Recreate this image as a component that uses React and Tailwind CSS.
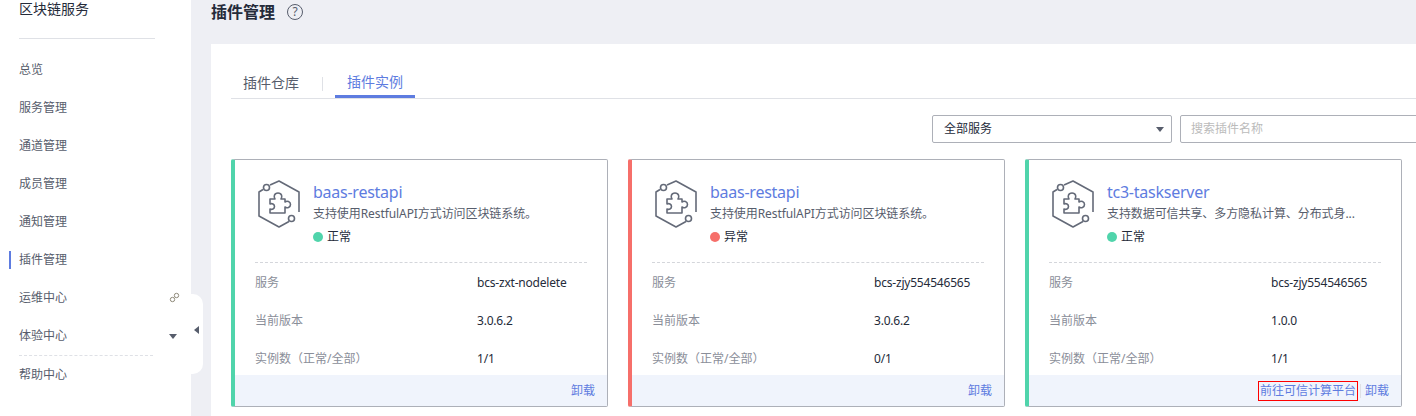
import React from "react";

const font = "font-['Noto_Sans','Noto_Sans_CJK_SC',sans-serif]";

const navItems = ["总览", "服务管理", "通道管理", "成员管理", "通知管理", "插件管理", "运维中心", "体验中心"];

const cards = [
  { name: "baas-restapi", desc: "支持使用RestfulAPI方式访问区块链系统。", ok: true, service: "bcs-zxt-nodelete", version: "3.0.6.2", count: "1/1" },
  { name: "baas-restapi", desc: "支持使用RestfulAPI方式访问区块链系统。", ok: false, service: "bcs-zjy554546565", version: "3.0.6.2", count: "0/1" },
  { name: "tc3-taskserver", desc: "支持数据可信共享、多方隐私计算、分布式身...", ok: true, service: "bcs-zjy554546565", version: "1.0.0", count: "1/1", trusted: true },
];

const PluginIcon = () => (
  <svg width="42" height="48" viewBox="0 0 42 48" fill="none" stroke="#646a78" strokeWidth="1.6" className="shrink-0">
    <path d="M12 5 L21 1 L41 12 V32" strokeLinejoin="round" />
    <path d="M31 41.5 L21 47 L1 36 V12 L5 9.5" strokeLinejoin="round" />
    <circle cx="8.5" cy="7.5" r="3" />
    <circle cx="33.5" cy="38.5" r="3" />
    <path
      d="M12 19 H17 C15.5 17 16 13 20 13 C24 13 24.5 17 23 19 H27 V22 C29 20.5 32.5 21.5 32.5 24.5 C32.5 27.5 29 28.5 27 27 V33 H12 V29 C14 30 16.5 29 16.5 26.5 C16.5 24 14 23 12 24 Z"
      strokeLinejoin="round"
    />
  </svg>
);

const Row = ({ label, value }) => (
  <div className="flex items-center h-[38px]">
    <span className="w-[222px] shrink-0 text-[#8a8e99]">{label}</span>
    <span className="text-[#252b3a] tracking-[-0.2px]">{value}</span>
  </div>
);

const Card = ({ card }) => (
  <div
    className={`w-[377px] h-[248px] shrink-0 flex flex-col rounded-[2px] border border-[#adb0b8] border-l-[4px] ${
      card.ok ? "border-l-[#50d4ab]" : "border-l-[#f66f6a]"
    }`}
  >
    <div className="flex-1 min-h-0 px-[20px]">
      <div className="flex gap-[13px] pt-[20px] pl-[3px] h-[103px] border-b border-dashed border-[#d4d6db]">
        <PluginIcon />
        <div className="min-w-0">
          <div className="text-[16px] leading-[24px] text-[#5e7ce0] tracking-[-0.25px]">{card.name}</div>
          <div className="text-[#575d6c] leading-[18px] mt-[1px] whitespace-nowrap tracking-[-0.08px]">{card.desc}</div>
          <div className="flex items-center gap-[4px] mt-[5px] leading-[18px] text-[#252b3a]">
            <span className={`w-[10px] h-[10px] rounded-full ${card.ok ? "bg-[#50d4ab]" : "bg-[#f66f6a]"}`} />
            {card.ok ? "正常" : "异常"}
          </div>
        </div>
      </div>
      <div className="pt-[1px]">
        <Row label="服务" value={card.service} />
        <Row label="当前版本" value={card.version} />
        <Row label="实例数（正常/全部）" value={card.count} />
      </div>
    </div>
    <div className="relative h-[31px] shrink-0 bg-[#f0f4fc] flex items-center justify-end pr-[12px] text-[#5e7ce0]">
      {card.trusted && (
        <>
          <span className="h-[20px] px-[1px] flex items-center border border-[#ff0000]">前往可信计算平台</span>
          <span className="w-px h-[14px] bg-[#dfe1e6] ml-[2px]" />
        </>
      )}
      <span className={card.trusted ? "ml-[4px]" : ""}>卸载</span>
    </div>
  </div>
);

export default function App() {
  return (
    <div className={`${font} relative w-[1416px] h-[416px] overflow-hidden flex bg-[#eeeff4] text-[12px]`}>
      {/* sidebar */}
      <aside className="w-[191px] shrink-0 bg-white text-[#575d6c]">
        <div className="h-[40px] mx-[19px] mr-[36px] border-b border-[#dfe1e6]">
          <div className="text-[14px] leading-[20px] text-[#252b3a] -mt-[1px]">区块链服务</div>
        </div>
        <nav className="pt-[12px]">
          {navItems.map((item) => (
            <div key={item} className="relative h-[38px] flex items-center pl-[19px] pr-[13px]">
              {item === "插件管理" && <span className="absolute left-[9px] top-[10px] w-[2px] h-[18px] bg-[#5e7ce0]" />}
              <span className="flex-1">{item}</span>
              {item === "运维中心" && (
                <svg width="11" height="11" viewBox="0 0 11 11" fill="none" stroke="#8f8a7a" strokeWidth="1" className="-mr-[2px] -mt-[2px]">
                  <circle cx="3.5" cy="7.5" r="2.2" />
                  <circle cx="7.5" cy="3.5" r="2.2" />
                </svg>
              )}
              {item === "体验中心" && <span className="mr-[1px] border-x-[4px] border-x-transparent border-t-[5px] border-t-[#575d6c]" />}
            </div>
          ))}
          <div className="mx-[19px] mr-[38px] border-t border-dashed border-[#dfe1e6]" />
          <div className="h-[38px] flex items-center pl-[19px]">帮助中心</div>
        </nav>
      </aside>

      {/* collapse handle */}
      <div className="absolute left-[191px] top-[294px] w-[12px] h-[80px] bg-white rounded-r-[10px] flex items-center justify-end pr-[4px]">
        <span className="border-y-[4px] border-y-transparent border-r-[5px] border-r-[#575d6c] -mt-[8px]" />
      </div>

      {/* content */}
      <main className="flex-1 min-w-0 pl-[20px]">
        <div className="h-[44px] flex items-start gap-[12px]">
          <h1 className="text-[16px] leading-[24px] font-bold text-[#252b3a]">插件管理</h1>
          <span className="mt-[4px] w-[16px] h-[16px] rounded-full border border-[#575d6c] text-[#575d6c] text-[12px] leading-[14px] text-center">?</span>
        </div>
        <div className="bg-white h-[372px] pl-[20px] pt-[27px]">
          <div className="flex items-end h-[28px] border-b border-[#dfe1e6] text-[14px] text-[#575d6c]">
            <div className="h-[27px] pt-[1px] pl-[12px] pr-[24px] relative">
              插件仓库
              <span className="absolute right-0 top-[6px] w-px h-[14px] bg-[#dfe1e6]" />
            </div>
            <div className="h-[28px] pt-[1px] w-[80px] ml-[12px] text-center text-[#5e7ce0] border-b-[3px] border-[#5e7ce0]">插件实例</div>
          </div>
          <div className="flex justify-end gap-[8px] mt-[16px] -mr-[14px]">
            <div className="w-[240px] h-[28px] rounded-[2px] border border-[#adb0b8] flex items-center justify-between pl-[11px] pr-[7px] text-[#252b3a]">
              全部服务
              <span className="border-x-[4px] border-x-transparent border-t-[5px] border-t-[#575d6c]" />
            </div>
            <div className="w-[250px] h-[28px] rounded-[2px] border border-[#adb0b8] flex items-center pl-[10px] text-[#bbbbbb]">
              搜索插件名称
            </div>
          </div>
          <div className="flex gap-[20px] mt-[16px]">
            {cards.map((card, i) => (
              <Card key={i} card={card} />
            ))}
          </div>
        </div>
      </main>
    </div>
  );
}
